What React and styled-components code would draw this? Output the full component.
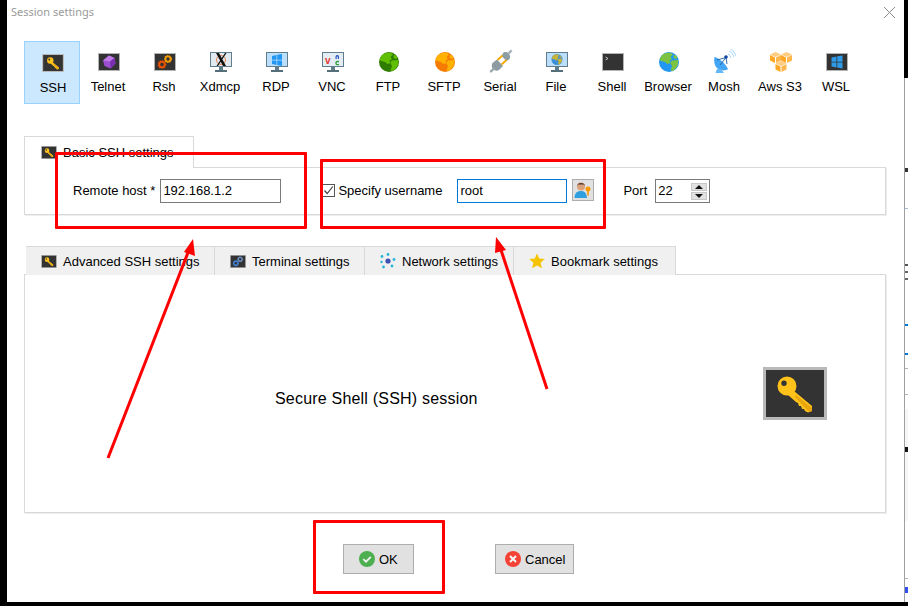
import React from 'react';
import styled, { createGlobalStyle } from 'styled-components';

const GlobalStyle = createGlobalStyle`
  html, body {
    margin: 0;
    padding: 0;
    background: #000;
  }
  body {
    font-family: "Liberation Sans", Arial, sans-serif;
    font-size: 13px;
    color: #000;
  }
`;

const Screen = styled.div`
  position: relative;
  display: flex;
  width: 908px;
  height: 606px;
  overflow: hidden;
  background: #000;
  padding-left: 7px;
  box-sizing: border-box;
`;

const Dialog = styled.div`
  width: 897px;
  height: 602px;
  background: #fff;
  flex: none;
`;

const TitleBar = styled.div`
  display: flex;
  justify-content: space-between;
  height: 41px;
  padding: 4px 8px 0 4px;
  box-sizing: border-box;
`;

const Title = styled.span`
  font-family: "Noto Sans", "Open Sans", sans-serif;
  font-size: 11px;
  line-height: 15px;
  color: #9a9a9a;
`;

const CloseIcon = styled.svg`
  width: 13px;
  height: 13px;
  margin-top: 2px;
`;

const SessionRow = styled.div`
  display: flex;
  margin-left: 17px;
  height: 63px;
`;

const SessionButton = styled.div`
  width: 56px;
  height: 63px;
  box-sizing: border-box;
  display: flex;
  flex-direction: column;
  align-items: center;
  padding-top: ${({ $active }) => ($active ? '11px' : '10px')};
  border: 1px solid ${({ $active }) => ($active ? '#99d1ff' : 'transparent')};
  background: ${({ $active }) => ($active ? '#cce8ff' : 'transparent')};
`;

const SessionIcon = styled.div`
  height: 20px;
  display: flex;
  align-items: center;
  justify-content: center;
  margin-left: 2px;

  svg {
    display: block;
  }
`;

const SessionLabel = styled.div`
  margin-top: 7px;
  line-height: 16px;
  white-space: nowrap;
  position: relative;
  left: ${({ $active }) => ($active ? '1px' : '0')};
`;

const BasicSection = styled.section`
  margin: 32px 0 0 17px;
`;

const BasicTab = styled.div`
  position: relative;
  display: flex;
  align-items: center;
  gap: 6px;
  width: 170px;
  height: 32px;
  box-sizing: border-box;
  padding-left: 16px;
  margin-bottom: -1px;
  background: #fff;
  border: 1px solid #d9d9d9;
  border-bottom: 0;
`;

const BasicPanel = styled.div`
  display: flex;
  align-items: flex-start;
  width: 862px;
  height: 48px;
  box-sizing: border-box;
  padding-top: 11px;
  border: 1px solid #d9d9d9;
  box-shadow: 1px 1px 0 #eeeeee;
`;

const FieldLabel = styled.label`
  line-height: 24px;
  margin-left: ${({ $ml }) => $ml}px;
  white-space: nowrap;
`;

const TextBox = styled.div`
  width: ${({ $w }) => $w}px;
  height: 24px;
  margin-left: ${({ $ml }) => $ml}px;
  box-sizing: border-box;
  line-height: 22px;
  padding-left: 2px;
  background: #fff;
  border: 1px solid ${({ $focused }) => ($focused ? '#0078d7' : '#7a7a7a')};
`;

const CheckBox = styled.span`
  width: 13px;
  height: 13px;
  flex: none;
  margin: 5px 0 0 ${({ $ml }) => $ml}px;
  box-sizing: border-box;
  border: 1px solid #555;
  background: #fff;
  display: flex;
  align-items: center;
  justify-content: center;
`;

const UserButton = styled.div`
  width: 22px;
  height: 22px;
  margin-left: 5px;
  box-sizing: border-box;
  background: #e1e1e1;
  border: 1px solid #adadad;
  display: flex;
  align-items: center;
  justify-content: center;
`;

const Spinner = styled.div`
  display: flex;
  align-items: center;
  justify-content: space-between;
  width: 55px;
  height: 24px;
  margin-left: 8px;
  box-sizing: border-box;
  padding: 1px 2px 1px 2px;
  border: 1px solid #7a7a7a;
  line-height: 20px;
`;

const SpinButtons = styled.div`
  display: flex;
  flex-direction: column;
  gap: 1px;
`;

const SpinButton = styled.div`
  width: 16px;
  height: 8px;
  background: #e1e1e1;
  border: 1px solid #c8c8c8;
  box-sizing: border-box;
  display: flex;
  align-items: center;
  justify-content: center;
`;

const TabsSection = styled.section`
  margin: 31px 0 0 17px;
`;

const TabRow = styled.div`
  display: flex;
  height: 29px;
  padding-left: 2px;
`;

const Tab = styled.div`
  display: flex;
  align-items: center;
  gap: 6px;
  width: ${({ $w }) => $w}px;
  height: 29px;
  box-sizing: border-box;
  padding-left: 15px;
  background: #f0f0f0;
  border-top: 1px solid #d9d9d9;
  border-right: 1px solid #d9d9d9;
  white-space: nowrap;
`;

const DescPanel = styled.div`
  display: flex;
  align-items: center;
  justify-content: space-between;
  width: 862px;
  height: 239px;
  margin-top: -1px;
  box-sizing: border-box;
  padding: 0 58px 0 250px;
  border: 1px solid #d9d9d9;
  box-shadow: 1px 1px 0 #eeeeee;
`;

const DescText = styled.div`
  font-size: 16px;
  letter-spacing: 0.2px;
  margin-top: 10px;
  white-space: nowrap;
`;

const Footer = styled.div`
  display: flex;
  padding: 31px 0 0 336px;
`;

const DialogButton = styled.div`
  display: flex;
  align-items: center;
  gap: 4px;
  height: 30px;
  width: ${({ $w }) => $w}px;
  margin-left: ${({ $ml }) => $ml}px;
  padding-left: ${({ $pl }) => $pl}px;
  box-sizing: border-box;
  background: #e1e1e1;
  border: 1px solid #adadad;
`;

const Sliver = styled.div`
  flex: 1;
  margin-top: 78px;
  height: 524px;
  background: #fff;
  border-left: 1px solid #a0a0a0;
  overflow: hidden;
  display: flex;
  flex-direction: column;
`;

const SliverBit = styled.div`
  flex: none;
  height: ${({ $h }) => $h}px;
  margin-top: ${({ $mt }) => $mt}px;
  background: ${({ $c }) => $c};
`;

const Highlight = styled.div`
  position: absolute;
  left: ${({ $x }) => $x}px;
  top: ${({ $y }) => $y}px;
  width: ${({ $w }) => $w}px;
  height: ${({ $h }) => $h}px;
  box-sizing: border-box;
  border: 3px solid #ff0000;
  border-radius: 1px;
  pointer-events: none;
`;

const ArrowLayer = styled.svg`
  position: absolute;
  left: 0;
  top: 0;
  width: 908px;
  height: 606px;
  pointer-events: none;
`;

const KeyShape = () => (
  <g fill="#ffc21a">
    <path d="M31 24 L49 39 V44 L45 45.5 L42 44 L41 42 L39 42 L38 39 L36 39 L35 36 L33 35 L25 28 Z" />
    <path fillRule="evenodd" d="M24 9.5a9.5 9.5 0 1 0 0 19a9.5 9.5 0 1 0 0-19z M21 13.5a2.7 2.7 0 1 1 0 5.4a2.7 2.7 0 1 1 0-5.4z" />
    <path d="M33 28 L49 41 V44 L46 45 L32 30 Z" fill="#e8a60c" />
  </g>
);

const KeyIcon = ({ w = 22, h = 18 }) => (
  <svg width={w} height={h} viewBox="0 0 64 53">
    <rect width="64" height="53" fill="#b9b9b9" />
    <rect x="3" y="3" width="58" height="47" fill="#333" />
    <KeyShape />
  </svg>
);

const DarkFrame = ({ w = 22, h = 18, children }) => (
  <svg width={w} height={h} viewBox="0 0 22 18">
    <rect width="22" height="18" fill="#b4b4b4" />
    <rect x="1" y="1" width="20" height="16" fill="#333" />
    {children}
  </svg>
);

const TelnetIcon = () => (
  <DarkFrame>
    <path d="M11 2.5 L16.5 5 L17.5 10.5 L12.5 15.5 L6.5 13 L5 7.5 Z" fill="#9c4fd0" />
    <path d="M11 2.5 L16.5 5 L12 8.5 L5 7.5 Z" fill="#c07be6" />
    <path d="M12 8.5 L16.5 5 L17.5 10.5 L12.5 15.5 Z" fill="#7b2fb0" />
  </DarkFrame>
);

const Gear = ({ cx, cy, r, color }) => (
  <g>
    <circle cx={cx} cy={cy} r={r} fill="none" stroke={color} strokeWidth={r * 0.7} />
    <circle cx={cx} cy={cy} r={r * 1.3} fill="none" stroke={color} strokeWidth={r * 0.5} strokeDasharray="1.3 1.1" />
  </g>
);

const RshIcon = () => (
  <DarkFrame>
    <Gear cx={8} cy={11.5} r={2.8} color="#e65100" />
    <Gear cx={14} cy={6} r={2.6} color="#f59a00" />
  </DarkFrame>
);

const TerminalTabIcon = () => (
  <DarkFrame w={16} h={13}>
    <Gear cx={8} cy={11.5} r={2.8} color="#3f7fd0" />
    <Gear cx={14} cy={6} r={2.6} color="#6b93c9" />
  </DarkFrame>
);

const Monitor = ({ children }) => (
  <svg width="22" height="20" viewBox="0 0 22 20">
    <rect x="0" y="0" width="22" height="15" fill="#607d8b" />
    <rect x="1" y="1" width="20" height="13" fill="#bbdefb" />
    <rect x="9" y="15" width="4" height="3" fill="#607d8b" />
    <rect x="5" y="18" width="12" height="2" fill="#546e7a" />
    {children}
  </svg>
);

const XdmcpIcon = () => (
  <Monitor>
    <rect x="1" y="1" width="20" height="13" fill="#dfe9ef" />
    <circle cx="11" cy="8" r="4.5" fill="none" stroke="#e8834a" strokeWidth="1" />
    <path d="M6 1 L9 1 L16 14 L13 14 Z M15 1 L16.5 1 L8 14 L6.5 14 Z" fill="#111" />
  </Monitor>
);

const WinPanes = ({ x, y, s, color }) => (
  <g fill={color}>
    <path d={`M${x} ${y + s * 0.1} L${x + s * 0.45} ${y} V${y + s * 0.47} H${x} Z`} />
    <path d={`M${x + s * 0.52} ${y - s * 0.02} L${x + s} ${y - s * 0.1} V${y + s * 0.47} H${x + s * 0.52} Z`} />
    <path d={`M${x} ${y + s * 0.54} H${x + s * 0.45} V${y + s} L${x} ${y + s * 0.9} Z`} />
    <path d={`M${x + s * 0.52} ${y + s * 0.54} H${x + s} V${y + s * 1.1} L${x + s * 0.52} ${y + s} Z`} />
  </g>
);

const RdpIcon = () => (
  <Monitor>
    <WinPanes x={6} y={3} s={10} color="#2196f3" />
  </Monitor>
);

const VncIcon = () => (
  <Monitor>
    <rect x="1" y="1" width="20" height="13" fill="#e3edf3" />
    <text x="3" y="12" fontSize="10" fontWeight="700" fontFamily="Liberation Sans" fill="#e53935">v</text>
    <path d="M13.5 7 V4.5 A1.8 1.8 0 0 1 17 4.5 V7 H15.8 V4.8 A0.6 0.6 0 0 0 14.7 4.8 V7 Z" fill="#2f55c4" />
    <path d="M17 9.5 H15.5 A1.6 1.6 0 0 0 15.5 12.7 H17" fill="none" stroke="#2e9e3a" strokeWidth="1.3" />
  </Monitor>
);

const Land = ({ color }) => (
  <path
    fill={color}
    d="M5 1.5 L11 0.5 L14 2.5 L11.5 5 L13 7 L10.5 8.5 L11.5 11 L8.5 12 L6 10 L2.5 9 L0.5 8 L2 4 Z M12.5 8.5 L19.5 8 L18.5 14 L14.5 19 L11.5 18.5 L13 14 L11.5 11.5 Z M15 2.5 L18.5 5 L17.5 7 L14.5 6 Z"
  />
);

const Globe = ({ ocean, land, size = 20 }) => (
  <svg width={size} height={size} viewBox="0 0 20 20">
    <clipPath id="globe-clip">
      <circle cx="10" cy="10" r="10" />
    </clipPath>
    <circle cx="10" cy="10" r="10" fill={ocean} />
    <g clipPath="url(#globe-clip)">
      <Land color={land} />
    </g>
  </svg>
);

const SerialIcon = () => (
  <svg width="24" height="24" viewBox="0 0 24 24" style={{ marginTop: -3 }}>
    <path d="M14.5 3.5 C16 2.5 18.5 3 20 5 C21.5 7 21.5 9 20 10.5 L17.5 12 L12.5 7 Z" fill="#8d9ba3" />
    <path d="M18.5 3.5 L22 0.5 L23.5 2 L20.5 5.5 Z" fill="#a9b5bb" />
    <path d="M3.5 14 L8 10.5 L14 17 L10 21 C7.5 22.5 5 21.5 3.5 19.5 C2.5 18 2.5 15.5 3.5 14 Z" fill="#8d9ba3" />
    <path d="M0.5 22 L4.5 18.5 L6 20 L2 24 Z" fill="#9aa7ad" />
    <path d="M8.5 11 L13.5 6.5 M12.5 15.5 L17.5 11" stroke="#f5a800" strokeWidth="1.8" />
  </svg>
);

const FileIcon = () => (
  <Monitor>
    <g transform="translate(5.5 2) scale(0.55)">
      <circle cx="10" cy="10" r="10" fill="#3a8fd6" />
      <Land color="#c9b43a" />
    </g>
  </Monitor>
);

const ShellIcon = () => (
  <DarkFrame>
    <path d="M3.5 4 L6 5.5 L3.5 7" fill="none" stroke="#ddd" strokeWidth="0.8" />
  </DarkFrame>
);

const MoshIcon = () => (
  <svg width="22" height="24" viewBox="0 0 22 24" style={{ marginTop: -3 }}>
    <path d="M0.5 8 C5 9 11 14 14 20 C10 23 3 21 1 16 C0 13.5 0 10.5 0.5 8 Z" fill="#42a5f5" />
    <path d="M3 20 L7 20 L10 24 L1.5 24 Z" fill="#64b5f6" />
    <path d="M3 11 L12 8.5 M6 16 L12 8.5 L13 15" stroke="#1e5f9e" strokeWidth="0.9" fill="none" />
    <circle cx="12" cy="8" r="1.8" fill="#0d47a1" />
    <path d="M14 5 A5 5 0 0 1 17 9 M15 2 A8 8 0 0 1 20 8 M16.5 0 A11 11 0 0 1 22 7" stroke="#90caf9" strokeWidth="0.8" fill="none" />
  </svg>
);

const Cube = ({ x, y }) => (
  <g transform={`translate(${x} ${y})`}>
    <path d="M5.5 0 L11 2.5 L5.5 5 L0 2.5 Z" fill="#ffcc80" />
    <path d="M0 3 L5 5.5 V11 L0 8.5 Z" fill="#ffa726" />
    <path d="M11 3 L6 5.5 V11 L11 8.5 Z" fill="#ffb74d" />
  </g>
);

const AwsIcon = () => (
  <svg width="22" height="20" viewBox="0 0 22 20">
    <Cube x={0} y={0} />
    <Cube x={11} y={0} />
    <Cube x={5.5} y={9} />
  </svg>
);

const WslIcon = () => (
  <DarkFrame>
    <WinPanes x={5.5} y={3.5} s={11} color="#2f9be8" />
  </DarkFrame>
);

const NetworkIcon = () => (
  <svg width="16" height="16" viewBox="0 0 16 16">
    <circle cx="8" cy="8" r="2.6" fill="#3f51b5" />
    <g fill="#26b5d8">
      <circle cx="8" cy="1.5" r="1.4" />
      <circle cx="2" cy="3.5" r="1.4" />
      <circle cx="14" cy="6.5" r="1.4" />
      <circle cx="1.5" cy="9" r="1.2" />
      <circle cx="3.5" cy="14" r="1.4" />
      <circle cx="12" cy="13" r="1.4" />
    </g>
  </svg>
);

const StarIcon = () => (
  <svg width="16" height="16" viewBox="0 0 16 16">
    <path d="M8 0.5 L10.2 5.6 L15.8 6.1 L11.6 9.8 L12.9 15.3 L8 12.4 L3.1 15.3 L4.4 9.8 L0.2 6.1 L5.8 5.6 Z" fill="#f5c400" />
  </svg>
);

const UserKeyIcon = () => (
  <svg width="18" height="18" viewBox="0 0 18 18">
    <circle cx="7" cy="5.5" r="4" fill="#d9a27a" />
    <path d="M3 5 C3 1 11 1 11 5 L10 3.5 L4 3.5 Z" fill="#4e342e" />
    <path d="M0.5 17 C0.5 11 4 10 7 10 C10 10 12.5 11 13 17 Z" fill="#2f9fe0" />
    <circle cx="14" cy="8" r="2.5" fill="#f59a00" />
    <path d="M13.2 9.5 H14.8 V15 L13.2 14 Z" fill="#f59a00" />
  </svg>
);

const OkIcon = () => (
  <svg width="16" height="16" viewBox="0 0 16 16">
    <circle cx="8" cy="8" r="8" fill="#4caf50" />
    <path d="M4.3 8.2 L7 10.7 L11.8 5.8" fill="none" stroke="#f2f2f2" strokeWidth="1.8" />
  </svg>
);

const CancelIcon = () => (
  <svg width="16" height="16" viewBox="0 0 16 16">
    <circle cx="8" cy="8" r="8" fill="#f44336" />
    <path d="M5 5 L11 11 M11 5 L5 11" fill="none" stroke="#f7f7f7" strokeWidth="2" />
  </svg>
);

const SESSIONS = [
  { label: 'SSH', icon: <KeyIcon />, active: true },
  { label: 'Telnet', icon: <TelnetIcon /> },
  { label: 'Rsh', icon: <RshIcon /> },
  { label: 'Xdmcp', icon: <XdmcpIcon /> },
  { label: 'RDP', icon: <RdpIcon /> },
  { label: 'VNC', icon: <VncIcon /> },
  { label: 'FTP', icon: <Globe ocean="#2f7d00" land="#5fbf00" /> },
  { label: 'SFTP', icon: <Globe ocean="#f57c00" land="#ffb300" /> },
  { label: 'Serial', icon: <SerialIcon /> },
  { label: 'File', icon: <FileIcon /> },
  { label: 'Shell', icon: <ShellIcon /> },
  { label: 'Browser', icon: <Globe ocean="#2196f3" land="#7cc342" /> },
  { label: 'Mosh', icon: <MoshIcon /> },
  { label: 'Aws S3', icon: <AwsIcon /> },
  { label: 'WSL', icon: <WslIcon /> },
];

const TABS = [
  { label: 'Advanced SSH settings', icon: <KeyIcon w={16} h={13} />, w: 189 },
  { label: 'Terminal settings', icon: <TerminalTabIcon />, w: 150 },
  { label: 'Network settings', icon: <NetworkIcon />, w: 149 },
  { label: 'Bookmark settings', icon: <StarIcon />, w: 162 },
];

// scraps of the window behind the dialog, top to bottom
const SLIVER = [
  { mt: 90, h: 4, c: '#333' },
  { mt: 36, h: 1, c: '#a9bcd8' },
  { mt: 55, h: 2, c: '#555' },
  { mt: 5, h: 2, c: '#666' },
  { mt: 5, h: 2, c: '#666' },
  { mt: 44, h: 2, c: '#0078d7' },
  { mt: 27, h: 2, c: '#0078d7' },
  { mt: 13, h: 1, c: '#b0b0b0' },
  { mt: 25, h: 1, c: '#b0b0b0' },
  { mt: 14, h: 38, c: '#f6f6f6' },
  { mt: 0, h: 5, c: '#111' },
  { mt: 0, h: 69, c: '#f6f6f6' },
  { mt: 57, h: 1, c: '#b0b0b0' },
  { mt: 8, h: 6, c: '#3050f0' },
];

const App = () => (
  <>
    <GlobalStyle />
    <Screen>
      <Dialog>
        <TitleBar>
          <Title>Session settings</Title>
          <CloseIcon viewBox="0 0 13 13">
            <path d="M1 1 L12 12 M12 1 L1 12" stroke="#8a8a8a" strokeWidth="1" fill="none" />
          </CloseIcon>
        </TitleBar>

        <SessionRow>
          {SESSIONS.map(({ label, icon, active }) => (
            <SessionButton key={label} $active={active}>
              <SessionIcon>{icon}</SessionIcon>
              <SessionLabel $active={active}>{label}</SessionLabel>
            </SessionButton>
          ))}
        </SessionRow>

        <BasicSection>
          <BasicTab>
            <KeyIcon w={16} h={13} />
            Basic SSH settings
          </BasicTab>
          <BasicPanel>
            <FieldLabel $ml={48}>Remote host *</FieldLabel>
            <TextBox $w={121} $ml={5}>192.168.1.2</TextBox>
            <CheckBox $ml={41}>
              <svg width="11" height="11" viewBox="0 0 11 11">
                <path d="M1.5 5.5 L4.2 8.5 L9.8 1.5" fill="none" stroke="#444" strokeWidth="1.2" />
              </svg>
            </CheckBox>
            <FieldLabel $ml={3}>Specify username</FieldLabel>
            <TextBox $w={110} $ml={15} $focused>root</TextBox>
            <UserButton>
              <UserKeyIcon />
            </UserButton>
            <FieldLabel $ml={29}>Port</FieldLabel>
            <Spinner>
              22
              <SpinButtons>
                <SpinButton>
                  <svg width="8" height="4" viewBox="0 0 8 4"><path d="M4 0 L8 4 H0 Z" fill="#111" /></svg>
                </SpinButton>
                <SpinButton>
                  <svg width="8" height="4" viewBox="0 0 8 4"><path d="M0 0 H8 L4 4 Z" fill="#111" /></svg>
                </SpinButton>
              </SpinButtons>
            </Spinner>
          </BasicPanel>
        </BasicSection>

        <TabsSection>
          <TabRow>
            {TABS.map(({ label, icon, w }) => (
              <Tab key={label} $w={w}>
                {icon}
                {label}
              </Tab>
            ))}
          </TabRow>
          <DescPanel>
            <DescText>Secure Shell (SSH) session</DescText>
            <KeyIcon w={64} h={53} />
          </DescPanel>
        </TabsSection>

        <Footer>
          <DialogButton $w={71} $ml={0} $pl={15}>
            <OkIcon />
            OK
          </DialogButton>
          <DialogButton $w={79} $ml={81} $pl={9}>
            <CancelIcon />
            Cancel
          </DialogButton>
        </Footer>
      </Dialog>

      <Sliver>
        {SLIVER.map((bit, i) => (
          <SliverBit key={i} $mt={bit.mt} $h={bit.h} $c={bit.c} />
        ))}
      </Sliver>

      <Highlight $x={55} $y={152} $w={252} $h={77} />
      <Highlight $x={320} $y={159} $w={286} $h={70} />
      <Highlight $x={313} $y={520} $w={132} $h={74} />

      <ArrowLayer viewBox="0 0 908 606">
        <g stroke="#ff0000" strokeWidth="3" fill="#ff0000">
          <line x1="108" y1="458" x2="189" y2="250" />
          <line x1="547" y1="389" x2="501" y2="250" />
        </g>
        <path d="M193 239 L195 256 L184 252 Z" fill="#ff0000" />
        <path d="M496 237 L506 250 L495 253 Z" fill="#ff0000" />
      </ArrowLayer>
    </Screen>
  </>
);

export default App;
